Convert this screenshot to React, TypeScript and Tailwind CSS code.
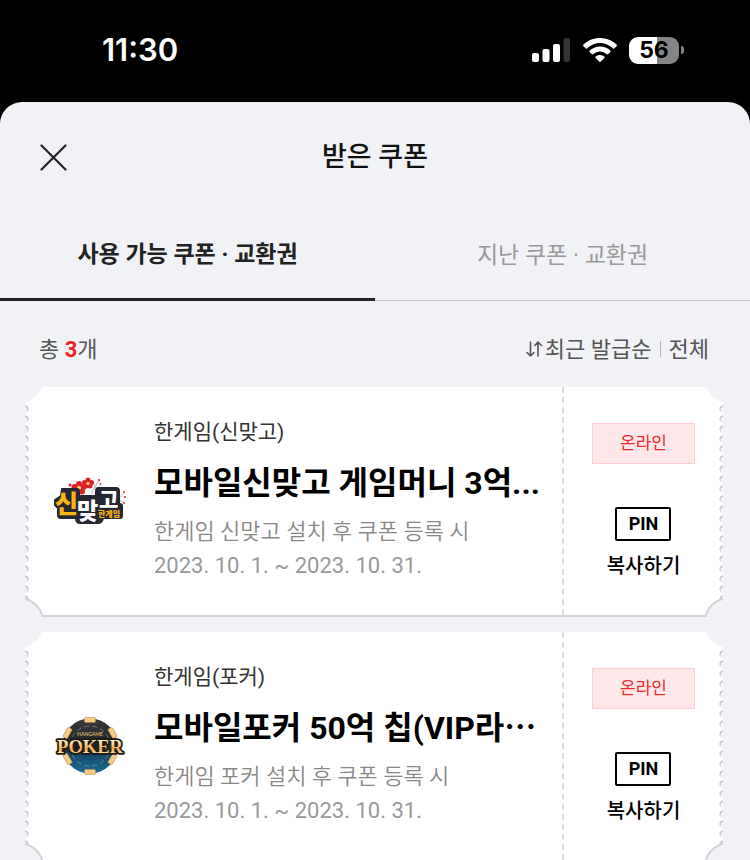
import { memo } from 'react'

interface Coupon {
  id: string
  brand: string
  title: string
  description: string
  period: string
  logo: 'matgo' | 'poker'
}

const coupons: Coupon[] = [
  {
    id: 'matgo',
    brand: '한게임(신맞고)',
    title: '모바일신맞고 게임머니 3억...',
    description: '한게임 신맞고 설치 후 쿠폰 등록 시',
    period: '2023. 10. 1. ~ 2023. 10. 31.',
    logo: 'matgo',
  },
  {
    id: 'poker',
    brand: '한게임(포커)',
    title: '모바일포커 50억 칩(VIP라⋯',
    description: '한게임 포커 설치 후 쿠폰 등록 시',
    period: '2023. 10. 1. ~ 2023. 10. 31.',
    logo: 'poker',
  },
]

function StatusBar() {
  return (
    <div className="flex h-[102px] items-start justify-between pt-8 pr-[66px] pl-[102px] font-['Inter',sans-serif] text-white">
      <span className="text-[31px] leading-9 font-semibold">11:30</span>
      <div className="flex h-9 items-center gap-3">
        <svg width="39" height="26" viewBox="0 0 39 26" aria-hidden="true">
          <rect x="0" y="16" width="7" height="9" rx="2" fill="#fff" />
          <rect x="10.500" y="12" width="7" height="13" rx="2" fill="#fff" />
          <rect x="21" y="7" width="7" height="18" rx="2" fill="#fff" />
          <rect x="31.500" y="1" width="6.500" height="24" rx="2" fill="#333" />
        </svg>
        <svg width="34" height="25" viewBox="0 0 34 25" fill="#fff" aria-hidden="true">
          <path d="M17 0C10.600 0 4.600 2.500 .3 6.800a.8.8 0 0 0 0 1.100l2.500 2.500c.3.300.8.300 1.100 0a18.700 18.700 0 0 1 26.200 0c.3.300.8.300 1.100 0l2.500-2.500a.8.8 0 0 0 0-1.100A23.700 23.700 0 0 0 17 0z" />
          <path d="M17 8.600c-4 0-7.700 1.600-10.400 4.200a.8.8 0 0 0 0 1.100L9 16.300c.3.300.8.300 1.100 0a10 10 0 0 1 13.800 0c.3.300.8.300 1.100 0l2.400-2.400a.8.8 0 0 0 0-1.100A15 15 0 0 0 17 8.600z" />
          <path d="M17 16.900c-1.700 0-3.200.6-4.400 1.700a.8.8 0 0 0 0 1.100l3.800 4c.3.400.9.400 1.200 0l3.800-4a.8.8 0 0 0 0-1.100A6.400 6.400 0 0 0 17 16.900z" />
        </svg>
        <div className="flex items-center gap-[2px]">
          <div className="flex h-[27px] w-[50px] items-center justify-center rounded-[9px] bg-[linear-gradient(90deg,#fff_56%,#858585_56%)] text-[23px] leading-none font-bold text-black">
            56
          </div>
          <div className="h-2 w-[3px] rounded-r-full bg-[#858585]" />
        </div>
      </div>
    </div>
  )
}

function MatgoLogo() {
  return (
    <svg width="74" height="52" viewBox="0 0 74 52" role="img" aria-label="신맞고">
      <g stroke="#b8a6a8" strokeWidth="0.800" fill="none">
        <path d="M38 19l8-14M41 13l6-1M42 11l-3-4M45 17l3-5M62 28l9-10M65 25l6 2M67 22l-1-6" />
      </g>
      <g fill="#dc2328">
        <circle cx="35" cy="5" r="2.500" />
        <circle cx="31.500" cy="7.500" r="2.500" />
        <circle cx="38.500" cy="7.500" r="2.500" />
        <circle cx="33" cy="11" r="2.500" />
        <circle cx="37" cy="11" r="2.500" />
        <circle cx="26" cy="9" r="3" />
        <circle cx="21.500" cy="12" r="3" />
        <circle cx="30.500" cy="12" r="3" />
        <circle cx="23" cy="16.500" r="3" />
        <circle cx="29" cy="16.500" r="3" />
        <circle cx="17" cy="10" r="1.500" />
        <circle cx="46" cy="5" r="1.100" />
        <circle cx="47.500" cy="9" r="0.900" />
        <circle cx="48" cy="13" r="1" />
        <circle cx="39" cy="7" r="0.900" />
        <circle cx="71" cy="17" r="1" />
        <circle cx="72" cy="22" r="1" />
        <circle cx="71" cy="28" r="1" />
      </g>
      <circle cx="35" cy="8.500" r="1.600" fill="#ffd36a" />
      <circle cx="26" cy="13" r="1.900" fill="#ffd36a" />
      <path
        d="M9 14h15q2 0 2 2v5h17v-5q0-3 3-3h17q3 0 3 3v13h1q2 0 2 2v10q0 2-2 2H50q-1 5-5 5H27q-4 0-4-5H8q-3 0-3-3v-7l-3-3v-5l6-4z"
        fill="#252833"
        stroke="#252833"
        strokeWidth="2"
        strokeLinejoin="round"
      />
      <text fontFamily="'Noto Sans CJK KR', sans-serif" fontWeight="900" fill="#fff">
        <tspan x="2" y="38" fontSize="25" fill="#fdb515">신</tspan>
        <tspan x="24" y="44" fontSize="23">맞</tspan>
        <tspan x="46" y="32" fontSize="21">고</tspan>
        <tspan x="45" y="42" fontSize="8" fill="#fdb515">한게임</tspan>
      </text>
    </svg>
  )
}

function PokerLogo() {
  return (
    <svg width="74" height="58" viewBox="-3 0 74 58" role="img" aria-label="HANGAME POKER">
      <defs>
        <linearGradient id="chip" x1="0" y1="0" x2="0" y2="1">
          <stop offset="0" stopColor="#38393b" />
          <stop offset="0.500" stopColor="#202326" />
          <stop offset="0.700" stopColor="#154f70" />
          <stop offset="1" stopColor="#1b6a95" />
        </linearGradient>
        <linearGradient id="gold" x1="0" y1="0" x2="0" y2="1">
          <stop offset="0.200" stopColor="#fff0b5" />
          <stop offset="0.600" stopColor="#f0ab4c" />
          <stop offset="0.800" stopColor="#ffdc94" />
        </linearGradient>
      </defs>
      <circle cx="34" cy="29" r="27.500" fill="url(#chip)" />
      <g fill="#f6cb84" stroke="#b98138" strokeWidth="0.500">
        {[0, 60, 120, 180, 240, 300].map((angle) => (
          <rect key={angle} x="28.500" y="0.500" width="11" height="5" rx="1" transform={`rotate(${angle} 34 29)`} />
        ))}
      </g>
      <circle cx="34" cy="29" r="20" fill="none" stroke="#8d9498" strokeWidth="0.700" strokeDasharray="5 3" />
      <text x="34" y="19" textAnchor="middle" fontFamily="Lato, sans-serif" fontWeight="700" fontSize="5" fill="#d4b06a">
        HANGAME
      </text>
      <text
        x="34"
        y="36"
        textAnchor="middle"
        fontFamily="'Liberation Serif', serif"
        fontWeight="700"
        fontSize="18.500"
        fill="url(#gold)"
        stroke="#1d1a18"
        strokeWidth="3.500"
        strokeLinejoin="round"
        paintOrder="stroke"
      >
        POKER
      </text>
      <path d="M20.500 25.500c1.500 2 3.500 3 3.500 5 0 1.600-2 2-2.900 1l.7 2.200h-2.600l.7-2.200c-.9 1-2.900.6-2.900-1 0-2 2-3 3.500-5z" fill="#1d1a18" />
    </svg>
  )
}

// Torn-ticket edge: round notches in the corners, small bites down both sides
function TicketEdges() {
  return (
    <div aria-hidden="true" className="pointer-events-none absolute inset-x-0 top-0 -bottom-[2px] overflow-hidden">
      <div className="absolute top-[17px] bottom-[18px] left-0 w-[5px] bg-[radial-gradient(circle_at_-1px_6px,#f1f2f6_3px,transparent_4px),radial-gradient(circle_at_0_5px,#bfbfc4_3px,transparent_4px)] bg-[length:5px_10px]" />
      <div className="absolute top-[17px] right-0 bottom-[18px] w-[5px] bg-[radial-gradient(circle_at_6px_6px,#f1f2f6_3px,transparent_4px),radial-gradient(circle_at_5px_5px,#bfbfc4_3px,transparent_4px)] bg-[length:5px_10px]" />
      <div className="absolute -top-8 -left-[30px] size-12 rounded-full bg-[#f1f2f6]" />
      <div className="absolute -top-8 -right-[30px] size-12 rounded-full bg-[#f1f2f6]" />
      <div className="absolute -bottom-[30px] -left-[31px] size-[50px] rounded-full border-2 border-[#d2d3d7] bg-[#f1f2f6]" />
      <div className="absolute -right-[31px] -bottom-[30px] size-[50px] rounded-full border-2 border-[#d2d3d7] bg-[#f1f2f6]" />
    </div>
  )
}

const CouponCard = memo(function CouponCard({ coupon }: { coupon: Coupon }) {
  return (
    <li className="relative flex border-b-2 border-[#d2d3d7] bg-white">
      <div className="flex min-w-0 flex-1 items-center pl-7">
        <div className="flex w-[101px] shrink-0">
          {coupon.logo === 'matgo' ? <MatgoLogo /> : <PokerLogo />}
        </div>
        <div className="min-w-0 flex-1 pt-[30px] pb-8">
          <p className="mb-3 text-[21px] leading-[30px] text-[#333]">{coupon.brand}</p>
          <h2 className="mb-2 text-[32px] leading-[48px] font-bold whitespace-nowrap text-black">{coupon.title}</h2>
          <p className="text-[22px] leading-[34px] font-[350] text-[#888]">{coupon.description}</p>
          <p className="text-[22px] leading-[34px] text-[#999]">{coupon.period}</p>
        </div>
      </div>
      <div className="flex w-[161px] shrink-0 flex-col items-center border-l-2 border-dashed border-[#dcdcdc] pt-9">
        <span className="flex h-[41px] w-[103px] items-center justify-center border border-[#fbcdd0] bg-[#fde7e8] text-[17px] text-[#ee2a2a]">
          온라인
        </span>
        <button type="button" className="mt-[43px] flex flex-col items-center gap-2 text-black">
          <span className="flex h-[34px] w-14 items-center justify-center rounded-[2px] border-2 border-black text-[18px] leading-none font-bold">
            PIN
          </span>
          <span className="text-[20px] leading-[34px] font-medium">복사하기</span>
        </button>
      </div>
      <TicketEdges />
    </li>
  )
})

export default function App() {
  return (
    <div lang="ko" className="flex min-h-screen flex-col bg-black font-[Roboto,'Noto_Sans_CJK_KR',sans-serif]">
      <StatusBar />
      <main className="flex-1 rounded-t-[22px] bg-[#f1f2f6]">
        <header className="grid h-[110px] grid-cols-[1fr_auto_1fr] items-center px-10">
          <button type="button" aria-label="닫기" className="justify-self-start">
            <svg width="27" height="27" viewBox="0 0 27 27" fill="none" stroke="#222" strokeWidth="2.200" strokeLinecap="round">
              <path d="M1.500 1.500l24 24M25.500 1.500l-24 24" />
            </svg>
          </button>
          <h1 className="text-[27px] leading-10 font-medium text-[#111]">받은 쿠폰</h1>
        </header>

        <div role="tablist" className="grid grid-cols-2">
          <button
            type="button"
            role="tab"
            aria-selected="true"
            className="h-[89px] border-b-[3px] border-[#222] text-[23px] font-bold text-[#222]"
          >
            사용 가능 쿠폰 · 교환권
          </button>
          <button
            type="button"
            role="tab"
            aria-selected="false"
            className="h-[89px] border-b border-[#c4c5c9] text-[23px] text-[#999]"
          >
            지난 쿠폰 · 교환권
          </button>
        </div>

        <div className="flex h-[86px] items-center justify-between pt-[10px] pr-[41px] pl-[39px] text-[22px] text-[#555]">
          <p>
            총 <strong className="font-bold text-[#ee2222]">3</strong>개
          </p>
          <div className="flex items-center gap-2">
            <button type="button" className="flex items-center gap-[2px]">
              <svg width="17" height="16" viewBox="0 0 17 16" fill="none" stroke="#555" strokeWidth="1.600" strokeLinecap="round" strokeLinejoin="round">
                <path d="M4.500 1v14M1 11.500L4.500 15 8 11.500M12 15V1M8.800 4.500L12 1l3.500 3.500" />
              </svg>
              최근 발급순
            </button>
            <span className="h-4 w-px bg-[#b4b4b8]" />
            <button type="button">전체</button>
          </div>
        </div>

        <ul className="flex flex-col gap-[15px] pr-[27px] pl-[25px]">
          {coupons.map((coupon) => (
            <CouponCard key={coupon.id} coupon={coupon} />
          ))}
        </ul>
      </main>
    </div>
  )
}
